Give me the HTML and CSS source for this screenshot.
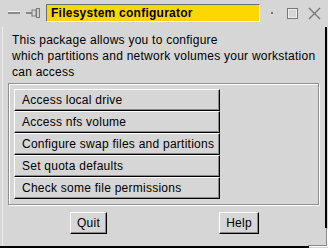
FILE: index.html
```html
<!DOCTYPE html>
<html>
<head>
<meta charset="utf-8">
<link rel="stylesheet" href="styles.css">
</head>
<body>
<div class="window">
  <div class="titlebar">
    <svg class="ic-min" width="12" height="4" viewBox="0 0 12 4"><rect x="0" y="1" width="12" height="2" fill="#8a8a8a"/><rect x="0" y="0" width="12" height="1" fill="#f4f4f4"/></svg>
    <svg class="ic-pin" width="15" height="10" viewBox="0 0 15 10"><rect x="0" y="4" width="6" height="2" fill="#8a8a8a"/><rect x="6" y="2" width="4" height="6" fill="none" stroke="#7a7a7a" stroke-width="1"/><rect x="10.5" y="0.5" width="3" height="9" fill="#cfcfcf" stroke="#7a7a7a" stroke-width="1"/></svg>
    <div class="title">Filesystem configurator</div>
    <svg class="ic-dot" width="3" height="3" viewBox="0 0 3 3"><rect x="0" y="0" width="2" height="2" fill="#777"/></svg>
    <svg class="ic-max" width="11" height="11" viewBox="0 0 11 11"><rect x="0.5" y="0.5" width="10" height="10" fill="none" stroke="#777" stroke-width="1"/><rect x="1.5" y="1.5" width="8" height="8" fill="none" stroke="#eee" stroke-width="1"/></svg>
    <svg class="ic-close" width="13" height="13" viewBox="0 0 13 13"><path d="M1 1 L12 12 M12 1 L1 12" stroke="#777" stroke-width="1.4"/></svg>
  </div>
  <p class="intro">This package allows you to configure<br>which partitions and network volumes your workstation<br>can access</p>
  <div class="frame">
    <div class="btn-list">
      <button class="btn item">Access local drive</button>
      <button class="btn item">Access nfs volume</button>
      <button class="btn item">Configure swap files and partitions</button>
      <button class="btn item">Set quota defaults</button>
      <button class="btn item">Check some file permissions</button>
    </div>
  </div>
  <div class="actions">
    <button class="btn action quit">Quit</button>
    <button class="btn action help">Help</button>
  </div>
  <div class="edge-right"></div>
  <div class="edge-left"></div>
  <div class="edge-bottom"></div>
  <div class="corner"></div>
</div>
</body>
</html>
```
FILE: styles.css
```css
* { box-sizing: border-box; }
html, body { margin: 0; padding: 0; }
body { background: #d6d6d6; }
.window {
  position: relative;
  width: 328px;
  height: 248px;
  background: #d6d6d6;
  font-family: "Liberation Sans", Arial, sans-serif;
  font-size: 12px;
  letter-spacing: 0.25px;
  color: #000;
  overflow: hidden;
}
.titlebar {
  display: flex;
  align-items: center;
  height: 26px;
  padding-left: 8px;
}
.ic-min { margin-right: 6px; }
.ic-pin { margin-right: 5px; }
.title {
  width: 214px;
  height: 18px;
  background: #ffd700;
  border-top: 1px solid #6e6e6e;
  border-left: 1px solid #6e6e6e;
  border-right: 1px solid #fff;
  border-bottom: 1px solid #fff;
  font-weight: bold;
  line-height: 16px;
  padding-left: 4px;
  white-space: nowrap;
}
.ic-dot { margin-left: 11px; }
.ic-max { margin-left: 13px; }
.ic-close { margin-left: 10px; }
.intro {
  margin: 6px 0 0 0;
  padding-left: 12px;
  line-height: 16px;
}
.frame {
  margin: 3px 0 0 8px;
  width: 311px;
  border: 1px solid #909090;
  box-shadow: inset 1px 1px 0 #fff, 1px 1px 0 #fff;
  padding: 5px 4px 5px 5px;
}
.btn-list {
  display: flex;
  flex-direction: column;
  width: 206px;
}
.btn {
  font-family: inherit;
  font-size: 12px;
  letter-spacing: 0.25px;
  color: #000;
  background: #d6d6d6;
  border-top: 1px solid #fff;
  border-left: 1px solid #fff;
  border-right: 1px solid #000;
  border-bottom: 1px solid #000;
  box-shadow: inset -1px -1px 0 #8a8a8a;
  margin: 0;
  border-radius: 0;
}
.item {
  height: 22px;
  text-align: left;
  padding: 0 0 1px 7px;
  white-space: nowrap;
}
.actions {
  display: flex;
  margin-top: 7px;
  padding-left: 70px;
}
.action {
  height: 22px;
  padding: 0 0 1px 0;
  text-align: center;
}
.quit { width: 37px; }
.help { width: 40px; margin-left: 112px; }
.edge-right {
  position: absolute;
  left: 325px;
  top: 27px;
  width: 2px;
  height: 201px;
  background: #000;
}
.edge-left {
  position: absolute;
  left: 2px;
  top: 27px;
  width: 1px;
  height: 219px;
  background: #ececec;
}
.edge-bottom {
  position: absolute;
  left: 0;
  top: 246px;
  width: 309px;
  height: 2px;
  background: #000;
}
.corner {
  position: absolute;
  left: 308px;
  top: 228px;
  width: 19px;
  height: 18px;
  border-right: 1px solid #8a8a8a;
  border-bottom: 1px solid #8a8a8a;
  box-shadow: 1px 1px 0 #fff;
}
```
